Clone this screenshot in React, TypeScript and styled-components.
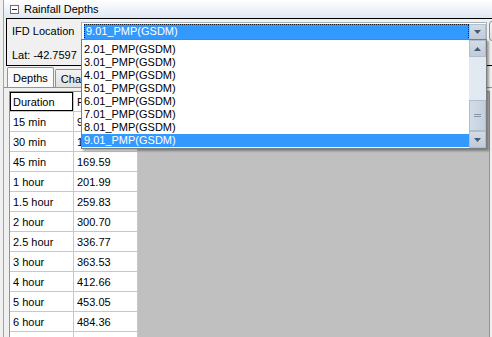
import React from 'react';
import styled, { createGlobalStyle } from 'styled-components';

const GlobalStyle = createGlobalStyle`
  html, body {
    margin: 0;
    padding: 0;
  }
  body {
    width: 492px;
    height: 337px;
    overflow: hidden;
    background: #f0f0f0;
    font-family: Tahoma, "Liberation Sans", Arial, sans-serif;
    font-size: 11px;
    color: #000;
  }
`;

const Frame = styled.div`
  margin-left: 3px;
  height: 337px;
  border-left: 1px solid #8ea8c9;
  display: flex;
  flex-direction: column;
  overflow: hidden;
`;

const TitleBar = styled.div`
  flex: none;
  height: 18px;
  display: flex;
  align-items: center;
  gap: 5px;
  padding-left: 6px;
  background: linear-gradient(#ffffff, #dfe8f4);
`;

const GroupBox = styled.div`
  flex: none;
  box-sizing: border-box;
  height: 48px;
  margin-left: 2px;
  padding: 3px 0 0 5px;
  border: 1px solid #000;
  border-right: none;
`;

const FieldRow = styled.div`
  display: flex;
  align-items: center;
  height: 18px;
`;

const FieldLabel = styled.div`
  flex: none;
  width: 69px;
`;

const LatRow = styled.div`
  display: flex;
  align-items: center;
  height: 21px;
  margin-top: 4px;
`;

const ComboBox = styled.div`
  flex: none;
  position: relative;
  box-sizing: border-box;
  width: 406px;
  height: 18px;
  display: flex;
  padding: 1px 0 0 1px;
  border: 1px solid #a9b3bf;
  background: #fff;
`;

const ComboText = styled.div`
  flex: 1;
  height: 16px;
  line-height: 15px;
  box-sizing: border-box;
  padding-left: 2px;
  margin-left: 1px;
  background: #3399ff;
  color: #fff;
  outline: 1px dotted #1a1a1a;
  outline-offset: -1px;
`;

const ArrowButton = styled.div<{ $tall?: boolean }>`
  flex: none;
  width: 17px;
  height: ${(p) => (p.$tall ? 17 : 16)}px;
  box-sizing: border-box;
  display: flex;
  align-items: center;
  justify-content: center;
  background: linear-gradient(#d3dce6, #bfcbd9);
  border: 1px solid #b0bdcc;
`;

const SideButton = styled.div`
  flex: none;
  width: 22px;
  height: 20px;
  margin-left: 2px;
  box-sizing: border-box;
  border: 1px solid #8d8d8d;
  border-radius: 3px;
  background: linear-gradient(#f6f6f6, #dcdcdc);
`;

const DropList = styled.div`
  position: absolute;
  top: 100%;
  left: -1px;
  width: 406px;
  height: 110px;
  box-sizing: border-box;
  border: 1px solid #7d7d7d;
  background: #fff;
  display: flex;
  box-shadow: 2px 2px 2px rgba(0, 0, 0, 0.35);
  z-index: 2;
`;

const ListItems = styled.div`
  flex: 1;
  padding-top: 3px;
  overflow: hidden;
`;

const ListItem = styled.div<{ $selected?: boolean }>`
  height: 13px;
  line-height: 13px;
  padding-left: 2px;
  background: ${(p) => (p.$selected ? '#3399ff' : 'transparent')};
  color: ${(p) => (p.$selected ? '#fff' : '#000')};
`;

const ScrollBar = styled.div`
  flex: none;
  width: 17px;
  display: flex;
  flex-direction: column;
  background: #e3e9f0;
`;

const ScrollTrack = styled.div`
  flex: 1;
  display: flex;
  flex-direction: column;
  justify-content: flex-end;
`;

const ScrollThumb = styled.div`
  height: 31px;
  box-sizing: border-box;
  border: 1px solid #b0bdcc;
  background: linear-gradient(90deg, #d3dde8, #c3cfdd);
  display: flex;
  align-items: center;
  justify-content: center;
`;

const TabStrip = styled.div`
  flex: none;
  height: 21px;
  display: flex;
  align-items: flex-end;
  gap: 1px;
  padding-left: 3px;
`;

const Tab = styled.div<{ $active?: boolean }>`
  box-sizing: border-box;
  height: ${(p) => (p.$active ? 20 : 18)}px;
  padding: 0 5px;
  display: flex;
  align-items: center;
  border: 1px solid #8e929b;
  border-bottom: none;
  border-radius: 2px 2px 0 0;
  background: ${(p) => (p.$active ? '#fafafa' : 'linear-gradient(#f2f2f2, #e0e0e0)')};
`;

const TabPanel = styled.div`
  flex: 1;
  display: flex;
  padding: 3px 0 0 5px;
  border-top: 1px solid #8e929b;
  min-height: 0;
`;

const GridView = styled.div`
  width: 479px;
  border: 1px solid #8f9399;
  border-bottom: none;
  background: #c0c0c0;
  display: flex;
  align-items: flex-start;
`;

const GridTable = styled.div`
  display: grid;
  grid-template-columns: 64px 64px;
  grid-auto-rows: 20px;
  background: #fff;
`;

const Cell = styled.div<{ $focused?: boolean }>`
  box-sizing: border-box;
  padding-left: 3px;
  display: flex;
  align-items: center;
  border-right: 1px solid #c8c8c8;
  border-bottom: 1px solid #c8c8c8;
  box-shadow: ${(p) => (p.$focused ? 'inset 0 0 0 1px #000' : 'none')};
  white-space: nowrap;
  overflow: hidden;
`;

const locations = [
  '2.01_PMP(GSDM)',
  '3.01_PMP(GSDM)',
  '4.01_PMP(GSDM)',
  '5.01_PMP(GSDM)',
  '6.01_PMP(GSDM)',
  '7.01_PMP(GSDM)',
  '8.01_PMP(GSDM)',
  '9.01_PMP(GSDM)',
];

// last row only peeks in at the bottom edge, so it is left blank
const depths = [
  ['15 min', '97.42'],
  ['30 min', '137.08'],
  ['45 min', '169.59'],
  ['1 hour', '201.99'],
  ['1.5 hour', '259.83'],
  ['2 hour', '300.70'],
  ['2.5 hour', '336.77'],
  ['3 hour', '363.53'],
  ['4 hour', '412.66'],
  ['5 hour', '453.05'],
  ['6 hour', '484.36'],
  ['', ''],
];

const Arrow = ({ up }: { up?: boolean }) => (
  <svg width="7" height="4" viewBox="0 0 7 4">
    <path d={up ? 'M0 4 L3.5 0 L7 4 Z' : 'M0 0 L3.5 4 L7 0 Z'} fill="#4a5a72" />
  </svg>
);

const CollapseIcon = () => (
  <svg width="9" height="9" viewBox="0 0 9 9">
    <rect x="0.5" y="0.5" width="8" height="8" fill="#fff" stroke="#6f6f6f" />
    <path d="M2 4.5 H7" stroke="#222" />
  </svg>
);

const Grip = () => (
  <svg width="7" height="5" viewBox="0 0 7 5">
    <path d="M0 1.5 H7 M0 3.5 H7" stroke="#8595aa" />
  </svg>
);

export default function App() {
  const selected = '9.01_PMP(GSDM)';

  return (
    <>
      <GlobalStyle />
      <Frame>
        <TitleBar>
          <CollapseIcon />
          <span>Rainfall Depths</span>
        </TitleBar>
        <GroupBox>
          <FieldRow>
            <FieldLabel>IFD Location</FieldLabel>
            <ComboBox>
              <ComboText>{selected}</ComboText>
              <ArrowButton>
                <Arrow />
              </ArrowButton>
              <DropList>
                <ListItems>
                  {locations.map((loc) => (
                    <ListItem key={loc} $selected={loc === selected}>
                      {loc}
                    </ListItem>
                  ))}
                </ListItems>
                <ScrollBar>
                  <ArrowButton $tall>
                    <Arrow up />
                  </ArrowButton>
                  <ScrollTrack>
                    <ScrollThumb>
                      <Grip />
                    </ScrollThumb>
                  </ScrollTrack>
                  <ArrowButton $tall>
                    <Arrow />
                  </ArrowButton>
                </ScrollBar>
              </DropList>
            </ComboBox>
            <SideButton />
          </FieldRow>
          <LatRow>Lat: -42.7597</LatRow>
        </GroupBox>
        <TabStrip>
          <Tab $active>Depths</Tab>
          <Tab>Chart</Tab>
        </TabStrip>
        <TabPanel>
          <GridView>
            <GridTable>
              <Cell $focused>Duration</Cell>
              <Cell>PMP</Cell>
              {depths.map(([d, v], i) => (
                <React.Fragment key={i}>
                  <Cell>{d}</Cell>
                  <Cell>{v}</Cell>
                </React.Fragment>
              ))}
            </GridTable>
          </GridView>
        </TabPanel>
      </Frame>
    </>
  );
}
